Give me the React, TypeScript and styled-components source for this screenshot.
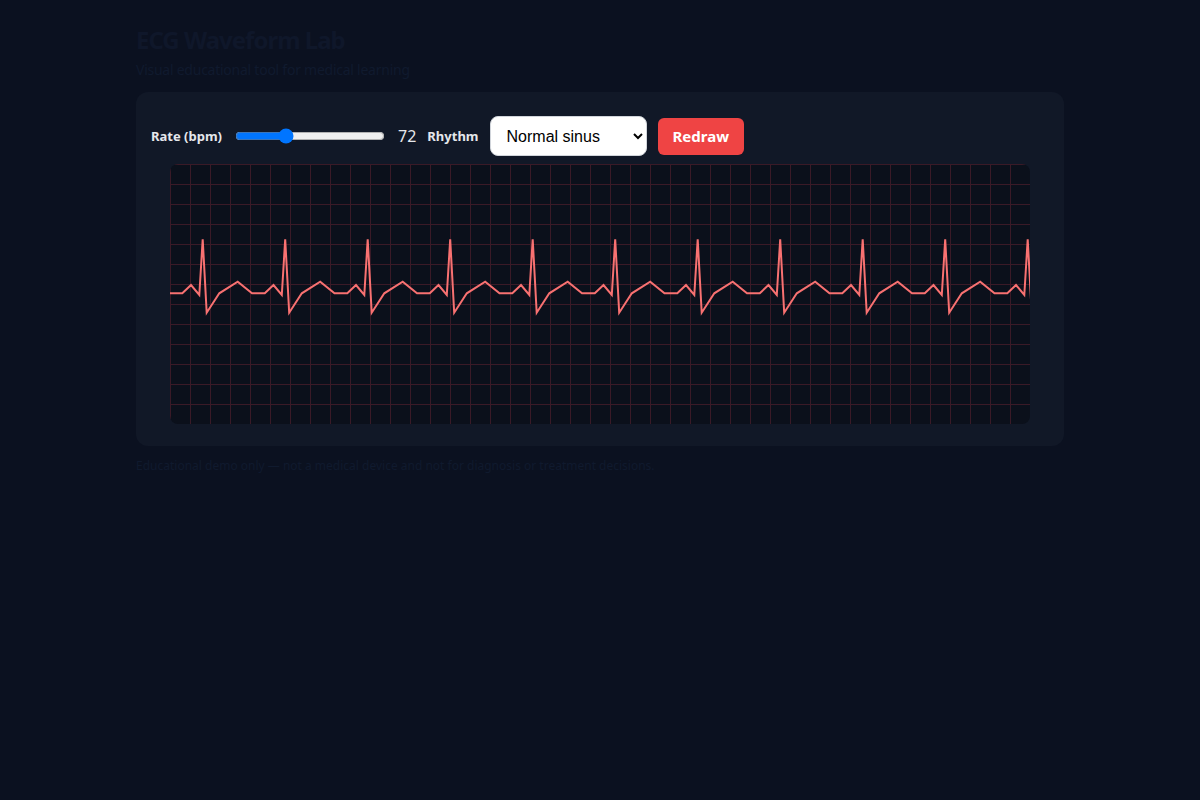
import { useMemo, useState } from "react";
import styled, { createGlobalStyle } from "styled-components";

const GlobalStyle = createGlobalStyle`
  html, body {
    margin: 0;
    padding: 0;
    background: #0b1120;
  }
  body {
    font-family: "Noto Sans", "Open Sans", "Liberation Sans", sans-serif;
    color: #e5e7eb;
  }
`;

const Page = styled.main`
  max-width: 928px;
  margin: 0 auto;
  padding: 24px 0;
`;

const Title = styled.h1`
  margin: 0;
  font-size: 24px;
  line-height: 32px;
  font-weight: 700;
  letter-spacing: -1px;
  color: #0f172a;
`;

const Subtitle = styled.p`
  margin: 4px 0 0;
  font-size: 14px;
  line-height: 20px;
  letter-spacing: -0.25px;
  color: #101a2e;
`;

const Panel = styled.section`
  margin-top: 12px;
  background: #111827;
  border-radius: 12px;
  padding: 24px 15px 22px;
`;

const Controls = styled.div`
  display: flex;
  align-items: center;
  gap: 11px;
  height: 40px;
`;

const Label = styled.label`
  font-size: 13px;
  font-weight: 700;
  color: #e5e7eb;
`;

const Range = styled.input`
  width: 150px;
  margin: 2px;
  accent-color: #0075ff;
`;

const Value = styled.span`
  font-size: 16px;
  color: #e5e7eb;
  min-width: 18px;
`;

const Select = styled.select`
  height: 40px;
  width: 157px;
  padding: 0 8px 0 12px;
  border: 1px solid #d1d5db;
  border-radius: 8px;
  background: #ffffff;
  color: #000;
  font-family: "Liberation Sans", Arial, sans-serif;
  font-size: 16px;
`;

const Button = styled.button`
  height: 37px;
  padding: 0 15px;
  border: none;
  border-radius: 6px;
  background: #ef4444;
  color: #ffffff;
  font-family: "Noto Sans", "Open Sans", sans-serif;
  font-size: 15px;
  font-weight: 700;
  cursor: pointer;
`;

const Screen = styled.div`
  width: 860px;
  height: 260px;
  margin: 8px auto 0;
  border-radius: 8px;
  overflow: hidden;
  background: #0b101b;

  svg {
    display: block;
  }
`;

const Footer = styled.p`
  margin: 10px 0 0;
  font-size: 12px;
  line-height: 20px;
  color: #101a2e;
`;

const W = 860;
const H = 260;
const BASE = 129.3;

function buildPath(bpm: number) {
  // period in px; 72 bpm -> 82.5px
  const period = (82.5 * 72) / bpm;
  const s = period / 82.5;
  const pts: [number, number][] = [[0, BASE]];
  for (let k = 0; k < 40; k++) {
    const x0 = 12.3 + period * k;
    if (x0 > W + 10) break;
    pts.push(
      [x0, BASE],
      [x0 + 8.7 * s, BASE - 8.3],
      [x0 + 17 * s, BASE + 1.7],
      [x0 + 20.4 * s, BASE - 54],
      [x0 + 24.4 * s, BASE + 19.4],
      [x0 + 37 * s, BASE],
      [x0 + 55.4 * s, BASE - 11.6],
      [x0 + 69.7 * s, BASE]
    );
  }
  return pts.map(([x, y], i) => `${i ? "L" : "M"}${x.toFixed(1)} ${y.toFixed(1)}`).join(" ");
}

function Grid() {
  const lines = [];
  for (let x = 0; x <= W; x += 20) {
    lines.push(<line key={`v${x}`} x1={x + 0.5} y1={0} x2={x + 0.5} y2={H} />);
  }
  for (let y = 0; y <= H; y += 20) {
    lines.push(<line key={`h${y}`} x1={0} y1={y + 0.5} x2={W} y2={y + 0.5} />);
  }
  return (
    <g stroke="#3a1a27" strokeWidth={1}>
      {lines}
    </g>
  );
}

export default function App() {
  const [bpm, setBpm] = useState(72);
  const [rhythm, setRhythm] = useState("sinus");
  const [seed, setSeed] = useState(0);
  const d = useMemo(() => buildPath(bpm), [bpm, rhythm, seed]);

  return (
    <>
      <GlobalStyle />
      <Page>
        <Title>ECG Waveform Lab</Title>
        <Subtitle>Visual educational tool for medical learning</Subtitle>
        <Panel>
          <Controls>
            <Label htmlFor="rate">Rate (bpm)</Label>
            <Range
              id="rate"
              type="range"
              min={40}
              max={140}
              value={bpm}
              onChange={(e) => setBpm(Number(e.target.value))}
            />
            <Value>{bpm}</Value>
            <Label htmlFor="rhythm">Rhythm</Label>
            <Select id="rhythm" value={rhythm} onChange={(e) => setRhythm(e.target.value)}>
              <option value="sinus">Normal sinus</option>
              <option value="brady">Sinus bradycardia</option>
              <option value="tachy">Sinus tachycardia</option>
              <option value="afib">Atrial fibrillation</option>
            </Select>
            <Button onClick={() => setSeed(seed + 1)}>Redraw</Button>
          </Controls>
          <Screen>
            <svg width={W} height={H} viewBox={`0 0 ${W} ${H}`}>
              <Grid />
              <path d={d} fill="none" stroke="#f87171" strokeWidth={2} strokeLinejoin="miter" />
            </svg>
          </Screen>
        </Panel>
        <Footer>
          Educational demo only — not a medical device and not for diagnosis or treatment decisions.
        </Footer>
      </Page>
    </>
  );
}
